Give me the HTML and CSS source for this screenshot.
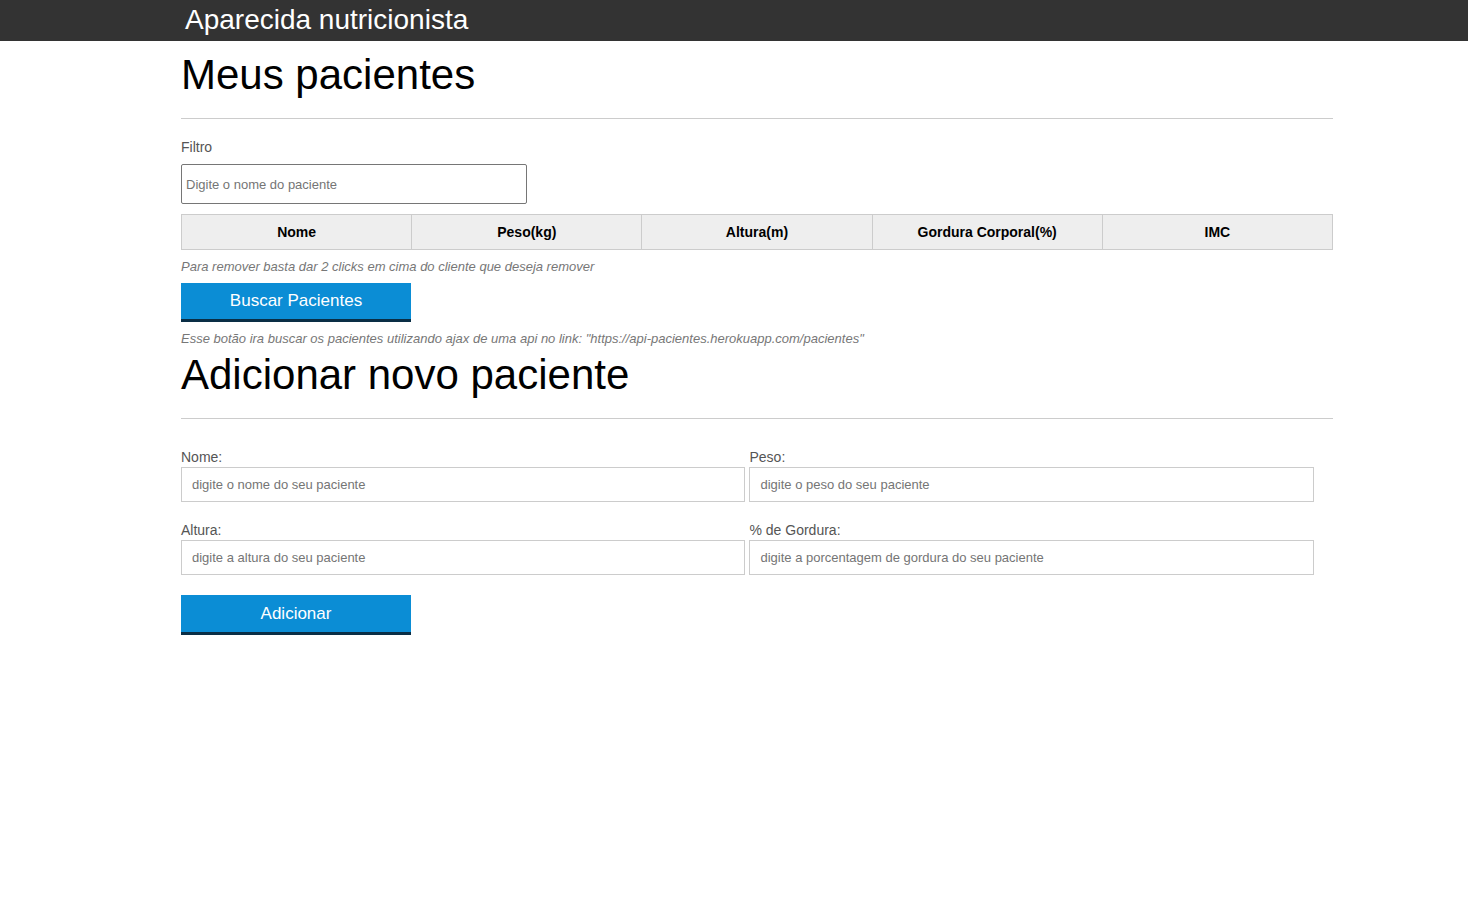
FILE: index.html
```html
<!DOCTYPE html>
<html lang="pt-BR">
<head>
<meta charset="utf-8">
<title>Aparecida nutricionista</title>
<link rel="stylesheet" href="styles.css">
</head>
<body>
<header class="topbar">
  <div class="container">
    <h1 class="brand">Aparecida nutricionista</h1>
  </div>
</header>
<main class="container">
  <section class="section">
    <h2 class="section-title">Meus pacientes</h2>
    <hr class="rule">
    <label class="filter-label" for="filtro">Filtro</label>
    <input class="filter-input" id="filtro" type="text" placeholder="Digite o nome do paciente">
    <table class="patients">
      <thead>
        <tr>
          <th>Nome</th>
          <th>Peso(kg)</th>
          <th>Altura(m)</th>
          <th>Gordura Corporal(%)</th>
          <th>IMC</th>
        </tr>
      </thead>
      <tbody></tbody>
    </table>
    <p class="note">Para remover basta dar 2 clicks em cima do cliente que deseja remover</p>
    <button class="btn" type="button">Buscar Pacientes</button>
    <p class="note note-last">Esse botão ira buscar os pacientes utilizando ajax de uma api no link: "https://api-pacientes.herokuapp.com/pacientes"</p>
  </section>
  <section class="section">
    <h2 class="section-title second">Adicionar novo paciente</h2>
    <hr class="rule">
    <form class="form">
      <div class="field">
        <label class="field-label" for="nome">Nome:</label>
        <input class="field-input" id="nome" type="text" placeholder="digite o nome do seu paciente">
      </div>
      <div class="field">
        <label class="field-label" for="peso">Peso:</label>
        <input class="field-input" id="peso" type="text" placeholder="digite o peso do seu paciente">
      </div>
      <div class="field">
        <label class="field-label" for="altura">Altura:</label>
        <input class="field-input" id="altura" type="text" placeholder="digite a altura do seu paciente">
      </div>
      <div class="field">
        <label class="field-label" for="gordura">% de Gordura:</label>
        <input class="field-input" id="gordura" type="text" placeholder="digite a porcentagem de gordura do seu paciente">
      </div>
      <div class="form-actions">
        <button class="btn" type="button">Adicionar</button>
      </div>
    </form>
  </section>
</main>
</body>
</html>
```

FILE: styles.css
```css
* {
  box-sizing: border-box;
}

body {
  margin: 0;
  font-family: "Liberation Sans", Arial, sans-serif;
  color: #000;
  background: #fff;
}

.container {
  width: 1152px;
  margin-left: 181px;
}

.topbar {
  background: #333;
  height: 41px;
}

.brand {
  margin: 0;
  padding-left: 4px;
  font-size: 28px;
  font-weight: normal;
  line-height: 40px;
  color: #fff;
}

.section-title {
  margin: 10px 0 0;
  font-size: 42px;
  font-weight: normal;
  line-height: 48px;
}

.section-title.second {
  margin-top: 0;
}

.rule {
  margin: 19px 0 0;
  border: 0;
  border-top: 1px solid #ccc;
  height: 0;
}

.filter-label {
  display: block;
  margin-top: 20px;
  font-size: 14px;
  line-height: 16px;
  color: #555;
}

.filter-input {
  display: block;
  margin-top: 9px;
  width: 346px;
  height: 40px;
  padding: 0 4px;
  border: 1px solid #767676;
  border-radius: 2px;
  font-family: "Liberation Sans", Arial, sans-serif;
  font-size: 13px;
  color: #333;
}

.filter-input::placeholder,
.field-input::placeholder {
  color: #757575;
}

.patients {
  margin-top: 10px;
  width: 100%;
  border-collapse: collapse;
  table-layout: fixed;
}

.patients th {
  background: #eee;
  border: 1px solid #ccc;
  padding: 9px 4px;
  font-size: 14px;
  line-height: 16px;
  font-weight: bold;
  text-align: center;
}

.note {
  margin: 9px 0;
  font-size: 13px;
  line-height: 15px;
  font-style: italic;
  color: #777;
}

.note.note-last {
  margin-bottom: 5px;
}

.btn {
  display: block;
  width: 230px;
  height: 39px;
  padding: 0;
  border: 0;
  border-bottom: 3px solid #0a2e45;
  background: #0b8dd5;
  color: #fff;
  font-family: "Liberation Sans", Arial, sans-serif;
  font-size: 17px;
  line-height: 36px;
  text-align: center;
  cursor: pointer;
}

.form {
  display: grid;
  grid-template-columns: 49% 49%;
  column-gap: 4px;
  row-gap: 20px;
  margin-top: 30px;
}

.field {
  display: flex;
  flex-direction: column;
}

.field-label {
  font-size: 14px;
  line-height: 16px;
  color: #555;
  margin-bottom: 2px;
}

.field-input {
  height: 35px;
  padding: 0 10px;
  border: 1px solid #ccc;
  font-family: "Liberation Sans", Arial, sans-serif;
  font-size: 13px;
  color: #333;
}

.form-actions {
  grid-column: 1 / -1;
}

.form-actions .btn {
  height: 40px;
  line-height: 37px;
}
```
